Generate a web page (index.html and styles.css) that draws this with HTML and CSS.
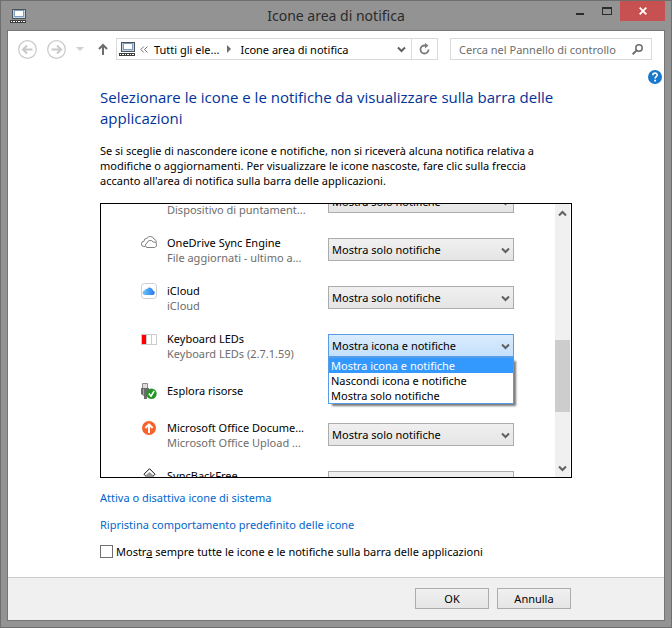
FILE: index.html
```html
<!doctype html>
<html lang="it">
<head>
<meta charset="utf-8">
<title>Icone area di notifica</title>
<link rel="stylesheet" href="styles.css">
</head>

<body>
<svg class="defs" width="0" height="0">
	<symbol id="tray" viewBox="0 0 16 14">
		<g shape-rendering="crispEdges">
			<rect x="2" y="0" width="14" height="10" fill="#4f5358"/>
			<rect x="3" y="1" width="12" height="8" fill="#c3d3e4"/>
			<rect x="4" y="1" width="10" height="7" fill="#7b9cc4"/>
			<rect x="5" y="2" width="8" height="5" fill="#fff"/>
			<rect x="0" y="11" width="16" height="3" fill="#3c3c3c"/>
			<path fill="#fff" d="M1 12h1v1h-1zM3 12h2v1h-2zM6 12h1v1h-1zM8 12h2v1h-2zM11 12h1v1h-1zM13 12h2v1h-2z"/>
		</g>
	</symbol>
	<symbol id="down" viewBox="0 0 9 7">
		<path d="M1 1.5 4.5 5 8 1.5" fill="none" stroke="#606060" stroke-width="2"/>
	</symbol>
</svg>

<div class="titlebar">
	<svg class="tray" width="16" height="14"><use href="#tray"/></svg>
	<h1>Icone area di notifica</h1>
	<div class="winbtns">
		<button type="button" aria-label="Riduci"><svg width="8" height="8"><path d="M0 6h8v2H0z" fill="#2b2b2b"/></svg></button>
		<button type="button" aria-label="Ingrandisci"><svg width="10" height="8"><path fill="#2b2b2b" fill-rule="evenodd" d="M0 0h10v8H0zM1 2v5h8V2z"/></svg></button>
		<button type="button" class="close" aria-label="Chiudi"><svg width="8" height="8"><path d="M.7.7 7.3 7.3M7.3.7.7 7.3" stroke="#fff" stroke-width="1.8"/></svg></button>
	</div>
</div>

<div class="panel">
	<div class="toolbar">
		<button type="button" class="back" aria-label="Indietro"><svg width="19" height="19" fill="none" stroke="#c9c9c9"><circle cx="9.5" cy="9.5" r="8.8" stroke-width="1.2"/><path d="M14.5 9.5H5.5M9 5.5 5 9.5 9 13.5" stroke-width="2"/></svg></button>
		<button type="button" class="fwd" aria-label="Avanti"><svg width="19" height="19" fill="none" stroke="#c9c9c9"><circle cx="9.5" cy="9.5" r="8.8" stroke-width="1.2"/><path d="M4.5 9.5H13.5M10 5.5 14 9.5 10 13.5" stroke-width="2"/></svg></button>
		<button type="button" class="recent" aria-label="Percorsi recenti"><svg width="8" height="4"><path d="M0 0h8L4 4z" fill="#d0d0d0"/></svg></button>
		<button type="button" class="up" aria-label="Su"><svg width="10" height="12" fill="none" stroke="#6d6d6d" stroke-width="2"><path d="M5 12V1.5M1 6 5 2 9 6"/></svg></button>
		<div class="address">
			<svg width="16" height="14"><use href="#tray"/></svg>
			<svg class="more" width="8" height="7" fill="none" stroke="#6d6d6d"><path d="M3.8.5.8 3.5 3.8 6.5M7.5.5 4.5 3.5 7.5 6.5"/></svg>
			<a href="#">Tutti gli ele...</a>
			<svg class="sep" width="4" height="8"><path d="M0 0v8L4 4z" fill="#6d6d6d"/></svg>
			<a href="#">Icone area di notifica</a>
			<svg class="arrow" width="9" height="7"><use href="#down"/></svg>
		</div>
		<button type="button" class="refresh" aria-label="Aggiorna"><svg width="11" height="12" fill="none" stroke="#7a7a7a"><path d="M6.5 2.5H5.5A4 4 0 1 0 9.5 6.5" stroke-width="1.8"/><path d="M6 0v5.4L9.5 2.6z" fill="#7a7a7a" stroke="none"/></svg></button>
		<div class="search">
			<input type="text" aria-label="Cerca" placeholder="Cerca nel Pannello di controllo">
			<svg width="11" height="11" fill="none" stroke="#6d6d6d"><circle cx="7" cy="4" r="3.2" stroke-width="1.5"/><path d="M4.6 6.4.7 10.3" stroke-width="2"/></svg>
		</div>
	</div>

	<div class="help">
		<a href="#" aria-label="Guida"><svg width="14" height="14"><circle cx="7" cy="7" r="7" fill="#1979ca"/><path d="M4.8 5.2C4.8 2.3 9.3 2.5 9.2 5 9.2 6.6 7.1 6.7 7.1 8.6" fill="none" stroke="#fff" stroke-width="1.6"/><path d="M6.2 9.7h1.8v1.8H6.2z" fill="#fff"/></svg></a>
	</div>

	<div class="main">
		<h2>Selezionare le icone e le notifiche da visualizzare sulla barra delle applicazioni</h2>
		<p class="info">Se si sceglie di nascondere icone e notifiche, non si riceverà alcuna notifica relativa a modifiche o aggiornamenti. Per visualizzare le icone nascoste, fare clic sulla freccia accanto all'area di notifica sulla barra delle applicazioni.</p>

		<div class="list">
			<ul class="rows">
				<li>
					<span></span>
					<label for="s1" class="last"><i>Dispositivo di puntament...</i></label>
					<div class="combo">
						<select id="s1"><option>Mostra solo notifiche</option></select>
						<svg width="9" height="7"><use href="#down"/></svg>
					</div>
				</li>
				<li>
					<svg class="ico" width="16" height="16" stroke="#808080" fill="#fff"><path d="M4 11.5H3A2.6 2.6 0 0 1 3 6.3 3 3 0 0 1 6 3.2 4 4 0 0 1 13 4 3 3 0 0 1 15 8"/><path d="M6 12.5A2.4 2.4 0 0 1 6 8 3.4 3.4 0 0 1 12.2 7 2.8 2.8 0 0 1 13.5 12.5z"/></svg>
					<label for="s2"><b>OneDrive Sync Engine</b><i>File aggiornati - ultimo a...</i></label>
					<div class="combo">
						<select id="s2"><option>Mostra solo notifiche</option></select>
						<svg width="9" height="7"><use href="#down"/></svg>
					</div>
				</li>
				<li>
					<svg class="ico" width="16" height="16"><defs><linearGradient id="cl"><stop offset="0" stop-color="#6cc9f8"/><stop offset="1" stop-color="#2676f0"/></linearGradient></defs><rect x=".5" y=".5" width="15" height="15" rx="3" fill="#fff" stroke="#cfcfcf"/><path d="M4 12A2.2 2.2 0 0 1 3.6 7.6 2 2 0 0 1 6 6 3.3 3.3 0 0 1 12 7.4 2.4 2.4 0 0 1 12 12z" fill="url(#cl)"/></svg>
					<label for="s3"><b>iCloud</b><i>iCloud</i></label>
					<div class="combo">
						<select id="s3"><option>Mostra solo notifiche</option></select>
						<svg width="9" height="7"><use href="#down"/></svg>
					</div>
				</li>
				<li>
					<svg class="ico" width="16" height="16" shape-rendering="crispEdges"><path d="M0 3h16v11H0z" fill="#ccc"/><path d="M1 4h4v9H1z" fill="#f00"/><path d="M6 4h4v9H6zM11 4h4v9h-4z" fill="#fff"/></svg>
					<label for="s4"><b>Keyboard LEDs</b><i>Keyboard LEDs (2.7.1.59)</i></label>
					<div class="combo open">
						<select id="s4"><option>Mostra icona e notifiche</option><option>Nascondi icona e notifiche</option><option>Mostra solo notifiche</option></select>
						<svg width="9" height="7"><use href="#down"/></svg>
						<ul class="menu" role="listbox" aria-label="Comportamento">
							<li role="option" aria-selected="true">Mostra icona e notifiche</li>
							<li role="option">Nascondi icona e notifiche</li>
							<li role="option">Mostra solo notifiche</li>
						</ul>
					</div>
				</li>
				<li class="single">
					<svg class="ico" width="16" height="16"><path d="M1.5.5h5v5h-5z" fill="#ddd" stroke="#8c8c8c"/><path d="M0 5h8v6l-2 2v3H3v-3l-3-2z" fill="#6b6b6b"/><path d="M2 6h1v6H2z" fill="#a5a5a5"/><circle cx="10.5" cy="10.7" r="5.2" fill="#249424"/><path d="M7.8 10.6 10 13.2 13.2 7.8" fill="none" stroke="#fff" stroke-width="1.6"/></svg>
					<span class="name">Esplora risorse</span>
				</li>
				<li>
					<svg class="ico" width="16" height="16"><circle cx="8" cy="8" r="7" fill="#f9622b"/><path d="M8 13V4.5M4.4 8 8 4.4 11.6 8" fill="none" stroke="#fff" stroke-width="2"/></svg>
					<label for="s6"><b>Microsoft Office Docume...</b><i>Microsoft Office Upload ...</i></label>
					<div class="combo">
						<select id="s6"><option>Mostra solo notifiche</option></select>
						<svg width="9" height="7"><use href="#down"/></svg>
					</div>
				</li>
				<li>
					<svg class="ico" width="16" height="16"><path d="M8.5.7 14 6.2 8.5 12 3 6.2z" fill="#fff" stroke="#111"/><path d="M8.5 4 12 7v5H5V7z" fill="#999"/></svg>
					<label for="s7"><b>SyncBackFree</b></label>
					<div class="combo">
						<select id="s7"></select>
					</div>
				</li>
			</ul>
			<div class="scroll">
				<svg width="9" height="7"><path d="M1 5.5 4.5 2 8 5.5" fill="none" stroke="#606060" stroke-width="2"/></svg>
				<div class="track"><div class="thumb"></div></div>
				<svg width="9" height="7"><use href="#down"/></svg>
			</div>
		</div>

		<p class="link"><a href="#">Attiva o disattiva icone di sistema</a></p>
		<p class="link"><a href="#">Ripristina comportamento predefinito delle icone</a></p>
		<div class="always">
			<input type="checkbox" id="always">
			<label for="always">Mostr<u>a</u> sempre tutte le icone e le notifiche sulla barra delle applicazioni</label>
		</div>
	</div>

	<div class="footer">
		<button type="button">OK</button>
		<button type="button">Annulla</button>
	</div>
</div>
</body>
</html>
```
FILE: styles.css
```css
* { box-sizing:border-box;}
body,ul,p,h1,h2 { margin:0; padding:0;}
body,button,input,select { font-family:"Noto Sans","Open Sans",sans-serif; font-size:11px; line-height:15px; color:#000;}
li { list-style:none;}
svg { display:block; flex:none;}
button { padding:0; border:none; background:none;}
b,i { font-weight:normal; font-style:normal;}
.defs { position:absolute;}

body { display:flex; flex-direction:column; min-height:100vh; padding:0 6px 6px; background:#939393; border:1px solid #6e6e6e;}

/* titlebar */
.titlebar { display:grid; grid-template-columns:1fr auto 1fr; height:29px;}
.titlebar .tray { margin:8px 0 0 3px;}
.titlebar h1 { font-size:14px; font-weight:normal; line-height:29px; color:#2b2b2b;}
.winbtns { display:flex; justify-content:flex-end;}
.winbtns button { display:flex; justify-content:center; width:27px; height:20px; padding-top:6px;}
.winbtns .close { width:45px; background:#c75050;}

.panel { flex:1; display:flex; flex-direction:column; background:#fff; border:1px solid #757575;}

/* toolbar */
.toolbar { display:flex; align-items:center; padding:7px 12px 6px 10px;}
.fwd { margin-left:10px;}
.recent { margin-left:10px;}
.up { margin:0 8px 0 14px;}
.address { flex:1; display:flex; align-items:center; height:22px; padding:0 5px 0 2px; border:1px solid #d9d9d9;}
.address a { color:#000; text-decoration:none; white-space:nowrap;}
.more { margin:0 6px 0 5px;}
.sep { margin:0 9px 0 8px;}
.arrow { margin-left:auto;}
.refresh { display:flex; align-items:center; justify-content:center; width:26px; height:22px; border:1px solid #d9d9d9; border-left:none;}
.search { display:flex; align-items:center; width:202px; height:22px; margin-left:12px; padding:0 8px; border:1px solid #d9d9d9;}
.search input { flex:1; min-width:0; padding:0; border:none; outline:none;}
.search input::placeholder { color:#6d6d6d; opacity:1;}

.help { display:flex; justify-content:flex-end; padding:4px 2px 3px;}

/* content */
.main { flex:1; padding:0 92px 18px;}
.main h2 { font-family:"Open Sans","Noto Sans",sans-serif; font-size:15px; font-weight:normal; line-height:21px; color:#003399;}
.info { margin:14px 0 15px; padding-right:16px;}

.list { display:flex; height:275px; border:1px solid #000; overflow:hidden;}
.rows { flex:1; margin-top:-17px; padding:0 41px 0 40px;}
.rows > li { display:grid; grid-template-columns:16px 1fr 186px; height:30px; margin-bottom:18px;}
.rows > .single { align-items:center; height:23px;}
.rows label,.name { padding-left:10px; white-space:nowrap;}
.rows .last { align-self:end;}
.rows b,.rows i { display:block;}
.rows i { color:#6d6d6d;}

.combo { position:relative; height:23px; margin-top:3px;}
.combo select { appearance:none; width:100%; height:23px; padding:0 20px 0 3px; border:1px solid #acacac; border-radius:0; outline:none; background:linear-gradient(#f0f0f0,#e5e5e5);}
.combo > svg { position:absolute; right:4px; top:9px; pointer-events:none;}
.open select { border-color:#569de5; background:linear-gradient(#daecfc,#c4e0fc);}
.menu { position:absolute; z-index:1; top:100%; left:0; right:0; background:#fff; border:1px solid #569de5; box-shadow:3px 3px 2px -1px #777;}
.menu li { padding-left:2px;}
.menu [aria-selected] { background:#3399ff; color:#fff;}

.scroll { display:flex; flex-direction:column; align-items:center; width:15px; margin-right:1px; padding:6px 0 5px; background:#f0f0f0;}
.track { flex:1; width:100%; padding-top:123px;}
.thumb { height:72px; background:#cdcdcd;}

.link { margin-top:12px;}
.link a { color:#0066cc; text-decoration:none;}
.always { display:flex; align-items:center; margin-top:12px;}
.always input { appearance:none; width:13px; height:13px; margin:0 3px 0 0; border:1px solid #707070; background:#fff;}

.footer { display:flex; justify-content:flex-end; gap:8px; padding:10px 93px 11px; background:#f0f0f0; border-top:1px solid #ccc;}
.footer button { width:74px; height:21px; border:1px solid #acacac; background:linear-gradient(#f0f0f0,#e5e5e5);}
```
